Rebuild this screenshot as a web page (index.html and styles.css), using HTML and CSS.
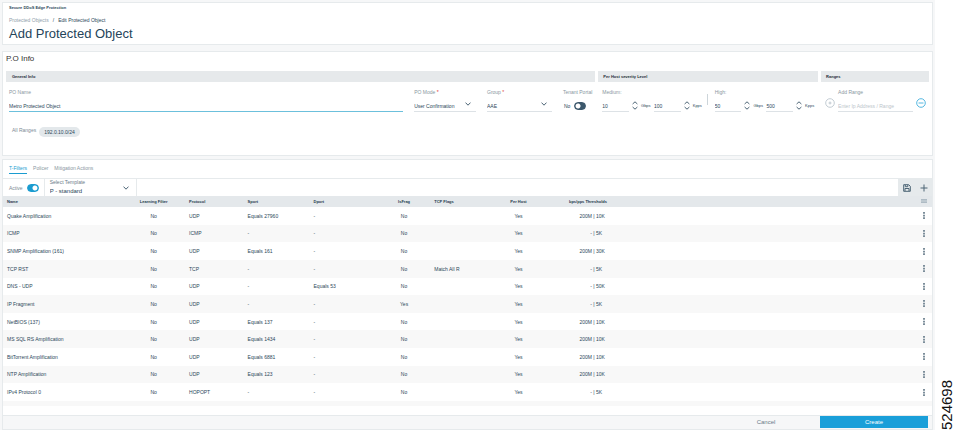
FILE: index.html
```html
<!DOCTYPE html>
<html lang="en">
<head>
<meta charset="utf-8">
<title>Add Protected Object</title>
<link rel="stylesheet" href="styles.css">
</head>
<body>
<svg class="defs" aria-hidden="true">
  <symbol id="chevron" viewBox="0 0 6 4"><path d="M.5.6 3 3.2 5.5.6"/></symbol>
  <symbol id="spin" viewBox="0 0 6 9"><path d="M.6 3 3 .8 5.4 3M.6 6 3 8.200 5.400 6"/></symbol>
  <symbol id="dots" viewBox="0 0 2 8"><path d="M0 0h2v2H0zM0 3h2v2H0zM0 6h2v2H0z"/></symbol>
</svg>
<main class="app">
  <header class="panel head">
    <p class="product">Secure DDoS Edge Protection</p>
    <nav class="crumbs"><a href="#">Protected Objects</a><span>/</span><b>Edit Protected Object</b></nav>
    <h1>Add Protected Object</h1>
  </header>

  <section class="panel info">
    <h2>P.O Info</h2>
    <div class="groups">
      <section>
        <h3>General Info</h3>
        <div class="fields general">
          <div class="field"><label for="po">PO Name</label><input class="line active" id="po" value="Metro Protected Object"></div>
          <div class="field"><label for="mode">PO Mode <i>*</i></label>
            <div class="pick"><select class="line" id="mode"><option>User Confirmation</option></select><svg><use href="#chevron"/></svg></div></div>
          <div class="field"><label for="group">Group <i>*</i></label>
            <div class="pick"><select class="line" id="group"><option>AAE</option></select><svg><use href="#chevron"/></svg></div></div>
          <div class="field"><label for="tenant">Tenant Portal</label>
            <div class="switch"><span>No</span><input type="checkbox" class="toggle" id="tenant"></div></div>
        </div>
      </section>
      <section>
        <h3>Per Host severity Level</h3>
        <div class="fields severity">
          <div class="field"><label for="mg">Medium:</label>
            <div class="rates">
              <input class="line" id="mg" value="10"><svg><use href="#spin"/></svg><span>Gbps</span>
              <input class="line" aria-label="Medium Kpps" value="100"><svg><use href="#spin"/></svg><span>Kpps</span>
            </div></div>
          <div class="field"><label for="hg">High:</label>
            <div class="rates">
              <input class="line" id="hg" value="50"><svg><use href="#spin"/></svg><span>Gbps</span>
              <input class="line" aria-label="High Kpps" value="500"><svg><use href="#spin"/></svg><span>Kpps</span>
            </div></div>
        </div>
      </section>
      <section>
        <h3>Ranges</h3>
        <div class="fields ranges">
          <button class="round" aria-label="Add"><svg viewBox="0 0 10 10"><circle cx="5" cy="5" r="4.300"/><path d="M5 3.500v3M3.500 5h3"/></svg></button>
          <div class="field"><label for="range">Add Range</label><input class="line" id="range" placeholder="Enter Ip Address / Range"></div>
          <button class="round blue" aria-label="More"><svg viewBox="0 0 10 10"><circle cx="5" cy="5" r="4.300"/><path d="M2.500 5h5"/></svg></button>
        </div>
      </section>
    </div>
    <div class="all"><span>All Ranges</span><span class="chip">192.0.10.0/24</span></div>
  </section>

  <section class="panel filters">
    <nav class="tabs"><a href="#" class="on">T-Filters</a><a href="#">Policer</a><a href="#">Mitigation Actions</a></nav>
    <div class="bar">
      <div class="state"><label for="act">Active</label><input type="checkbox" class="toggle" id="act" checked></div>
      <div class="template"><label for="tpl">Select Template</label>
        <div class="pick"><select id="tpl"><option>P - standard</option></select><svg><use href="#chevron"/></svg></div></div>
      <div class="tools">
        <button aria-label="Save"><svg viewBox="0 0 8 8"><path d="M.7.7h5l1.600 1.600v5H.7zM2.300 1v1.700h2.500V1M2 7V4.500h4V7"/></svg></button>
        <button aria-label="Add filter"><svg viewBox="0 0 8 8"><path d="M4 .5v7M.5 4h7"/></svg></button>
      </div>
    </div>
    <div class="sheet">
    <table>
      <colgroup><col class="w-name"><col class="w-learn"><col class="w-proto"><col class="w-sport"><col class="w-dport"><col class="w-frag"><col class="w-flags"><col class="w-host"><col class="w-rate"><col><col class="w-menu"></colgroup>
      <thead><tr><th>Name</th><th>Learning Filter</th><th>Protocol</th><th>Sport</th><th>Dport</th><th>IsFrag</th><th>TCP Flags</th><th>Per Host</th><th>bps/pps Thresholds</th><th></th><th><svg class="colicon" viewBox="0 0 6 4"><path d="M0 .5h6M0 2h6M0 3.500h6M1 0v4M3 0v4M5 0v4"/></svg></th></tr></thead>
      <tbody>
        <tr><td>Quake Amplification</td><td>No</td><td>UDP</td><td>Equals 27960</td><td>-</td><td>No</td><td></td><td>Yes</td><td><span>200M</span> | 10K</td><td></td><td><button aria-label="Menu"><svg><use href="#dots"/></svg></button></td></tr>
        <tr><td>ICMP</td><td>No</td><td>ICMP</td><td>-</td><td>-</td><td>No</td><td></td><td>Yes</td><td><span>-</span> | 5K</td><td></td><td><button aria-label="Menu"><svg><use href="#dots"/></svg></button></td></tr>
        <tr><td>SNMP Amplification (161)</td><td>No</td><td>UDP</td><td>Equals 161</td><td>-</td><td>No</td><td></td><td>Yes</td><td><span>200M</span> | 30K</td><td></td><td><button aria-label="Menu"><svg><use href="#dots"/></svg></button></td></tr>
        <tr><td>TCP RST</td><td>No</td><td>TCP</td><td>-</td><td>-</td><td>No</td><td>Match All R</td><td>Yes</td><td><span>-</span> | 5K</td><td></td><td><button aria-label="Menu"><svg><use href="#dots"/></svg></button></td></tr>
        <tr><td>DNS - UDP</td><td>No</td><td>UDP</td><td>-</td><td>Equals 53</td><td>No</td><td></td><td>Yes</td><td><span>-</span> | 50K</td><td></td><td><button aria-label="Menu"><svg><use href="#dots"/></svg></button></td></tr>
        <tr><td>IP Fragment</td><td>No</td><td>UDP</td><td>-</td><td>-</td><td>Yes</td><td></td><td>Yes</td><td><span>-</span> | 5K</td><td></td><td><button aria-label="Menu"><svg><use href="#dots"/></svg></button></td></tr>
        <tr><td>NetBIOS (137)</td><td>No</td><td>UDP</td><td>Equals 137</td><td>-</td><td>No</td><td></td><td>Yes</td><td><span>200M</span> | 10K</td><td></td><td><button aria-label="Menu"><svg><use href="#dots"/></svg></button></td></tr>
        <tr><td>MS SQL RS Amplification</td><td>No</td><td>UDP</td><td>Equals 1434</td><td>-</td><td>No</td><td></td><td>Yes</td><td><span>200M</span> | 10K</td><td></td><td><button aria-label="Menu"><svg><use href="#dots"/></svg></button></td></tr>
        <tr><td>BitTorrent Amplification</td><td>No</td><td>UDP</td><td>Equals 6881</td><td>-</td><td>No</td><td></td><td>Yes</td><td><span>200M</span> | 10K</td><td></td><td><button aria-label="Menu"><svg><use href="#dots"/></svg></button></td></tr>
        <tr><td>NTP Amplification</td><td>No</td><td>UDP</td><td>Equals 123</td><td>-</td><td>No</td><td></td><td>Yes</td><td><span>200M</span> | 10K</td><td></td><td><button aria-label="Menu"><svg><use href="#dots"/></svg></button></td></tr>
        <tr><td>IPv4 Protocol 0</td><td>No</td><td>HOPOPT</td><td>-</td><td>-</td><td>No</td><td></td><td>Yes</td><td><span>-</span> | 5K</td><td></td><td><button aria-label="Menu"><svg><use href="#dots"/></svg></button></td></tr>
      </tbody>
    </table>
    </div>
    <div class="tail"></div>
    <footer><button class="cancel">Cancel</button><button class="create">Create</button></footer>
  </section>
</main>
<aside>524698</aside>
</body>
</html>
```
FILE: styles.css
```css
* { box-sizing: border-box; margin: 0; padding: 0; }
body {
  display: flex; min-height: 100vh; background: #fff; color: #2b4759;
  font: 5px/8px "Liberation Sans", Arial, sans-serif;
}
input, select, button { font: inherit; color: inherit; border: 0; background: none; border-radius: 0; outline: 0; appearance: none; min-width: 0; }
a { color: inherit; text-decoration: none; }
svg { fill: none; stroke: #4c6475; flex: none; }
.defs { display: none; }

.app { flex: 1; display: flex; flex-direction: column; background: #f6f7f8; padding: 2px 2px 0; min-width: 0; }
.panel { background: #fff; border: 1px solid #e6eaec; }
aside { width: 20px; padding-right: 4px; writing-mode: vertical-rl; transform: rotate(180deg); font-size: 15px; line-height: 16px; color: #111; }

.head { padding: 1px 6px 0; margin-bottom: 6px; }
.product { font-weight: bold; font-size: 4px; line-height: 8px; }
.crumbs { display: flex; gap: 4px; line-height: 8px; margin-top: 4px; color: #90a0ab; }
.crumbs b { font-weight: normal; color: #2b4759; }
.crumbs span { color: #2b4759; }
h1 { font-size: 13px; line-height: 20px; font-weight: normal; color: #25445a; }

.info { padding: 0 3px; margin-bottom: 3px; }
h2 { font-size: 8px; line-height: 14px; font-weight: normal; color: #333; padding-bottom: 5px; }
.groups { display: grid; grid-template-columns: 590fr 220fr 108fr; gap: 3px; }
h3 { background: #e6e9eb; font-size: 4px; line-height: 11px; padding: 0 6px; color: #1d2b36; }
.groups section + section h3 { padding-left: 5px; }
.fields { padding: 6px 3px 0; display: grid; align-items: start; }
.groups section + section .fields { padding-left: 4px; }
.general { grid-template-columns: 395fr 62fr 65fr 29fr; column-gap: 11px; }
.severity { grid-template-columns: 1fr 1fr; column-gap: 12px; }
.ranges { grid-template-columns: 10px 1fr 10px; column-gap: 3px; }
.field label { display: block; color: #8997a1; line-height: 8px; white-space: nowrap; }
.field i { color: #d33; font-style: normal; }
.line { display: block; width: 100%; height: 16px; border-bottom: 1px solid #dde2e6; padding-top: 4px; }
.line.active { border-color: #6cc0dc; }
::placeholder { color: #bcc5cb; opacity: 1; }
.pick { display: grid; align-items: center; }
.pick > * { grid-area: 1 / 1; }
.pick svg { width: 6px; height: 4px; justify-self: end; pointer-events: none; margin: 0 5px 1px 0; }
.switch { display: flex; align-items: center; gap: 4px; height: 16px; padding: 4px 0 0 1px; }
.toggle { width: 12px; height: 8px; border: 1px solid #3c586c; border-radius: 4px; background: radial-gradient(circle at 3px 50%, #fff 2px, #3c586c 3px); flex: none; }
.toggle:checked { border-color: #1a9cd0; background: radial-gradient(circle at 7px 50%, #fff 2px, #1a9cd0 3px); }
.rates { display: grid; grid-template-columns: 1fr 6px 10px 1fr 6px 10px; gap: 3px; align-items: center; font-size: 4px; }
.rates .line { font-size: 5px; }
.rates svg { width: 6px; height: 9px; margin-top: 3px; }
.rates span { margin-top: 4px; }
.severity .field + .field { position: relative; }
.severity .field + .field::before { content: ""; position: absolute; left: -8px; top: 6px; height: 11px; border-left: 1px solid #cdd5da; }
.round { width: 10px; height: 10px; margin-top: 10px; }
.round svg { display: block; width: 10px; height: 10px; stroke: #b4bfc8; stroke-width: 0.8; }
.round.blue svg { stroke: #2ca6d8; }
.all { display: flex; gap: 3px; padding: 14px 6px 18px; color: #7b8a95; }
.chip { background: #e3e8eb; border-radius: 5px; line-height: 10px; padding: 0 5px; color: #2b4759; margin-top: 1px; }

.filters { flex: 1; display: flex; flex-direction: column; }
.tabs { display: flex; gap: 6px; padding: 4px 6px; color: #8997a1; border-bottom: 1px solid #e6eaec; }
.tabs a { line-height: 9px; border-bottom: 1px solid transparent; }
.tabs .on { color: #1a9cd0; border-color: #1a9cd0; }
.bar { display: flex; height: 17px; }
.state { display: flex; align-items: center; gap: 4px; padding: 0 5px 0 6px; color: #7b8a95; border-right: 1px solid #e6eaec; }
.template { width: 92px; padding: 0 2px 0 5px; border-right: 1px solid #e6eaec; }
.template label { display: block; line-height: 7px; color: #6a7b88; }
.template select { width: 100%; font-size: 6px; line-height: 8px; }
.template .pick svg { margin-bottom: 5px; }
.tools { margin-left: auto; display: flex; background: #e6eaec; }
.tools button { width: 17px; }
.tools svg { width: 8px; height: 8px; vertical-align: middle; }

.sheet { flex: 1; display: flex; }
table { width: 100%; border-collapse: collapse; table-layout: fixed; text-align: left; }
th { height: 11px; background: #e4e8eb; font-size: 4px; padding-left: 4px; white-space: nowrap; color: #1f3a4d; }
td { padding-left: 4px; height: 17px; white-space: nowrap; }
tbody tr:nth-child(even), .tail { background: #f8f8f8; }
td:nth-child(2), td:nth-child(6), td:nth-child(8), th:nth-child(2), th:nth-child(6), th:nth-child(8) { text-align: center; }
tr > :nth-child(2) { padding-right: 12px; }
tr > :nth-child(6) { padding-right: 10px; }
tr > :nth-child(8) { padding-right: 32px; }
.w-name { width: 13.700%; } .w-learn { width: 5.900%; } .w-proto { width: 6.300%; } .w-sport { width: 7.100%; }
.w-dport { width: 8%; } .w-frag { width: 5%; } .w-flags { width: 7.500%; } .w-host { width: 7%; } .w-rate { width: 8%; } .w-menu { width: 16px; }
td:nth-child(9) span { display: inline-block; width: 23px; text-align: right; }
th:last-child, td:last-child { text-align: center; padding: 0; }
td button { display: block; margin: auto; width: 8px; height: 8px; }
td svg { display: block; margin: auto; width: 2px; height: 7px; fill: #6a7e8c; stroke: none; }
.colicon { width: 6px; height: 4px; stroke: #8fa0ac; stroke-width: 0.5; }
.tail { height: 5px; margin-bottom: 9px; }
footer { display: flex; justify-content: flex-end; background: #f6f7f8; border-top: 1px solid #e6eaec; padding: 0 4px 1px 0; }
footer button { width: 108px; line-height: 12px; font-size: 6px; color: #6a7b88; }
footer .create { background: #1a9fd9; color: #fff; }
```
